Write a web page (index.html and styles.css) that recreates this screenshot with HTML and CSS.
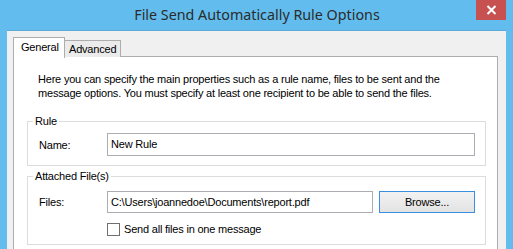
FILE: index.html
```html
<!DOCTYPE html>
<html>
<head>
<meta charset="utf-8">
<link rel="stylesheet" href="styles.css">
</head>
<body>
<div class="window">
  <div class="titlebar">
    <div class="title">File Send Automatically Rule Options</div>
    <div class="close"><svg width="11" height="10" viewBox="0 0 11 10"><path d="M1.5 1 L9.5 9 M9.5 1 L1.5 9" stroke="#fff" stroke-width="2"/></svg></div>
  </div>
  <div class="client">
    <div class="tabs">
      <div class="tab active">General</div>
      <div class="tab">Advanced</div>
    </div>
    <div class="panel">
      <p class="intro">Here you can specify the main properties such as a rule name, files to be sent and the<br>message options. You must specify at least one recipient to be able to send the files.</p>
      <fieldset class="group group-rule">
        <legend>Rule</legend>
        <div class="row">
          <span class="label">Name:</span>
          <div class="textbox wide">New Rule</div>
        </div>
      </fieldset>
      <fieldset class="group group-files">
        <legend>Attached File(s)</legend>
        <div class="row">
          <span class="label">Files:</span>
          <div class="textbox files">C:\Users\joannedoe\Documents\report.pdf</div>
          <div class="button">Browse...</div>
        </div>
        <div class="check-row">
          <span class="checkbox"></span>
          <span class="check-label">Send all files in one message</span>
        </div>
      </fieldset>
    </div>
  </div>
</div>
</body>
</html>
```
FILE: styles.css
```css
html, body {
  margin: 0;
  padding: 0;
  background: #62bdee;
}
.window {
  width: 513px;
  height: 249px;
  overflow: hidden;
  background: #62bdee;
  display: flex;
  flex-direction: column;
}
.titlebar {
  height: 30px;
  flex: none;
  display: flex;
  justify-content: center;
  position: relative;
}
.title {
  font-family: "Noto Sans", sans-serif;
  font-size: 14.3px;
  color: #2b2b2b;
  line-height: 29px;
  padding-left: 1px;
}
.close {
  position: absolute;
  top: 0;
  right: 7px;
  width: 30px;
  height: 20px;
  background: #c75050;
  display: flex;
  align-items: center;
  justify-content: center;
}
.client {
  flex: 1;
  margin: 0 7px;
  background: #f0f0f0;
  border-top: 1px solid #5aa9d6;
  padding: 6px 8px 0 6px;
  font-family: "Liberation Sans", Arial, sans-serif;
  font-size: 11px;
  letter-spacing: -0.2px;
  color: #000;
}
.tabs {
  display: flex;
  align-items: flex-end;
  height: 20px;
  margin-bottom: -1px;
  position: relative;
}
.tab {
  border: 1px solid #adadad;
  border-bottom: none;
  height: 17px;
  line-height: 17px;
  padding: 0 5px 0 4px;
  background: #ebebeb;
  box-sizing: border-box;
}
.tab.active {
  background: #fff;
  height: 21px;
  line-height: 19px;
  padding: 0 7px;
  width: 52px;
  position: relative;
  z-index: 1;
  margin-bottom: -1px;
}
.tab.active + .tab {
  border-left: none;
  width: 56px;
}
.panel {
  background: #fff;
  border: 1px solid #adadad;
  height: 200px;
  padding: 0 11px 0 13px;
}
.intro {
  margin: 15px 0 0 11px;
  line-height: 14px;
}
.group {
  border: 1px solid #dcdcdc;
  margin: 0;
  padding: 0 10px;
  box-sizing: border-box;
}
.group legend {
  padding: 0 2px;
  margin-left: -5px;
  line-height: 13px;
}
.group-rule {
  margin-top: 15px;
  height: 51px;
  padding-top: 5px;
}
.group-files {
  margin-top: 4px;
  padding-top: 8px;
  height: 75px;
}
.row {
  display: flex;
  align-items: center;
}
.label {
  width: 68px;
  flex: none;
  padding-left: 1px;
}
.textbox {
  border: 1px solid #abadb3;
  box-sizing: border-box;
  height: 23px;
  line-height: 21px;
  padding-left: 3px;
  background: #fff;
  white-space: nowrap;
  overflow: hidden;
}
.textbox.wide {
  width: 368px;
}
.textbox.files {
  width: 266px;
  height: 22px;
  line-height: 20px;
}
.button {
  margin-left: 6px;
  width: 96px;
  height: 22px;
  box-sizing: border-box;
  border: 1px solid #3c8fe0;
  background: linear-gradient(#f2f2f2, #e3e3e3);
  text-align: center;
  line-height: 20px;
}
.check-row {
  display: flex;
  align-items: center;
  margin-top: 10px;
  padding-left: 69px;
  line-height: 13px;
}
.checkbox {
  width: 13px;
  height: 13px;
  box-sizing: border-box;
  border: 1px solid #707070;
  background: #fff;
  flex: none;
}
.check-label {
  margin-left: 4px;
}
```
